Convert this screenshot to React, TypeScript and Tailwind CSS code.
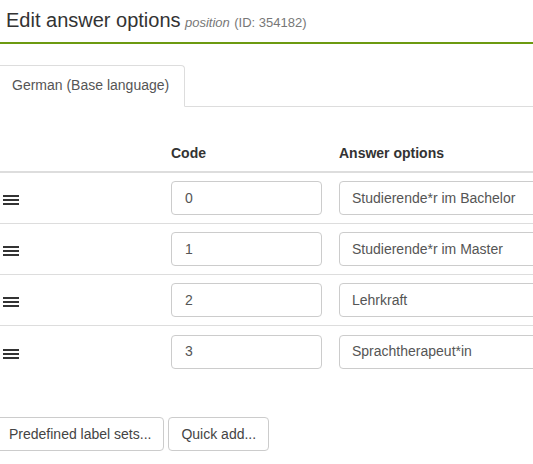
import React from "react";

const rows = [
  { code: "0", label: "Studierende*r im Bachelor" },
  { code: "1", label: "Studierende*r im Master" },
  { code: "2", label: "Lehrkraft" },
  { code: "3", label: "Sprachtherapeut*in" },
];

function Bars() {
  return (
    <svg width="16" height="10" viewBox="0 0 16 10" className="mt-[4px] shrink-0">
      <rect x="0" y="0" width="16" height="2" fill="#333" />
      <rect x="0" y="4" width="16" height="2" fill="#333" />
      <rect x="0" y="8" width="16" height="2" fill="#333" />
    </svg>
  );
}

export default function App() {
  return (
    <div
      className="w-[533px] h-[464px] overflow-hidden bg-white text-[#333]"
      style={{ fontFamily: '"Liberation Sans", Arial, sans-serif' }}
    >
      <div className="h-[44px] border-b-2 border-[#6c9a10] pt-[9px] px-[6px]">
        <span className="text-[20px] leading-[22px] text-[#333]">Edit answer options</span>{" "}
        <span className="text-[13px] italic text-[#777]">position</span>{" "}
        <span className="text-[13px] text-[#777]">(ID: 354182)</span>
      </div>

      <div className="ml-[-4px] w-[541px]">
        <div className="mt-[21px] flex border-b border-[#ddd]">
          <div className="-mb-px rounded-t-[4px] border border-[#ddd] border-b-white bg-white px-[15px] pt-[9px] pb-[11px] text-[14px] leading-[20px] text-[#555]">
            German (Base language)
          </div>
        </div>

        <div className="mt-[28px]">
          <div className="flex border-b-2 border-[#ddd] h-[38px] items-center text-left text-[14px] font-bold leading-[20px]">
            <div className="w-[167px] shrink-0" />
            <div className="w-[168px] shrink-0 pl-[8px]">Code</div>
            <div className="flex-1 pl-[8px]">Answer options</div>
          </div>
          {rows.map((r, i) => (
            <div
              key={r.code}
              className={`flex h-[51px] items-center ${i < rows.length - 1 ? "border-b border-[#ddd]" : ""}`}
            >
              <div className="w-[167px] shrink-0 pl-[7px] flex items-center">
                <Bars />
              </div>
              <div className="w-[168px] shrink-0 px-[8px]">
                <div className="h-[34px] w-[151px] rounded-[4px] border border-[#ccc] px-[13px] flex items-center text-[14px] text-[#555]">
                  {r.code}
                </div>
              </div>
              <div className="shrink-0 px-[8px]">
                <div className="h-[34px] w-[250px] rounded-[4px] border border-[#ccc] px-[12px] flex items-center text-[14px] text-[#555]">
                  {r.label}
                </div>
              </div>
            </div>
          ))}
        </div>

        <div className="mt-[40px] flex gap-[4px]">
          <button className="h-[34px] rounded-[4px] border border-[#ccc] bg-white px-[12px] text-[14px] leading-[20px] text-[#444]">
            Predefined label sets...
          </button>
          <button className="h-[34px] rounded-[4px] border border-[#ccc] bg-white px-[12px] text-[14px] leading-[20px] text-[#444]">
            Quick add...
          </button>
        </div>
      </div>
    </div>
  );
}
